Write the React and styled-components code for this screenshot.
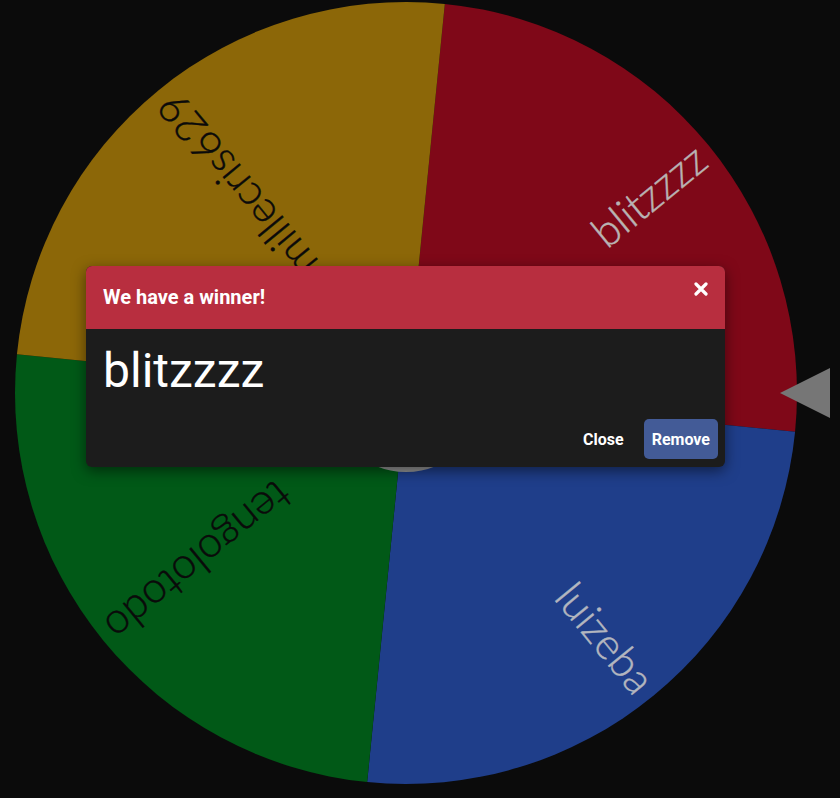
import React from "react";
import styled, { createGlobalStyle } from "styled-components";

const Global = createGlobalStyle`
  html, body { margin: 0; padding: 0; background: #0b0b0b; }
  body { font-family: Roboto, "Liberation Sans", sans-serif; overflow: hidden; }
`;

const Page = styled.div`
  position: relative;
  width: 840px;
  height: 798px;
  box-sizing: border-box;
  padding: 1px 0 0 14px;
  display: flex;
  align-items: flex-start;
`;

const WheelSvg = styled.svg`
  display: block;
  flex: none;
  width: 784px;
  height: 784px;
`;

const Label = styled.text`
  font-family: Lato, "Open Sans", sans-serif;
  font-weight: 300;
  font-size: 43px;
  stroke: ${(p) => p.fill};
  stroke-width: 0.4px;
`;

const Pointer = styled.svg`
  position: absolute;
  left: 780px;
  top: 368px;
  width: 50px;
  height: 50px;
`;

const Modal = styled.div`
  position: absolute;
  left: 86px;
  top: 266px;
  width: 639px;
  background: #1c1c1c;
  border-radius: 6px;
  overflow: hidden;
  box-shadow: 0 4px 14px rgba(0, 0, 0, 0.5);
  display: flex;
  flex-direction: column;
`;

const Header = styled.div`
  background: #b82e3f;
  padding: 16px 17px;
  border-bottom: 1px solid #b82e3f;
  display: flex;
  align-items: flex-start;
  justify-content: space-between;
`;

const Title = styled.h5`
  margin: 0;
  color: #fff;
  font-size: 20px;
  font-weight: 700;
  line-height: 30px;
`;

const CloseX = styled.button`
  background: none;
  border: 0;
  padding: 0;
  margin: 0;
  width: 14px;
  height: 14px;
  display: flex;
  cursor: pointer;
`;

const Body = styled.div`
  padding: 14px 17px 0;
`;

const Winner = styled.div`
  color: #fff;
  font-size: 48px;
  font-weight: 400;
  line-height: 56px;
`;

const Footer = styled.div`
  display: flex;
  justify-content: flex-end;
  align-items: center;
  gap: 12px;
  padding: 20px 7px 8px;
`;

const Btn = styled.button`
  height: 40px;
  padding: 0 8px;
  border: 0;
  border-radius: 5px;
  font-family: Roboto, "Liberation Sans", sans-serif;
  font-size: 16px;
  font-weight: 700;
  color: #fff;
  background: ${(p) => (p.$primary ? "#435b97" : "transparent")};
  cursor: pointer;
`;

const CX = 392;
const CY = 392;
const R = 391;

const segments = [
  { name: "blitzzzz", color: "#7f0818", text: "#b9b3b3" },
  { name: "luizeba", color: "#1f3e8a", text: "#b3b6bf" },
  { name: "tengolotodo", color: "#015917", text: "#0a0a0a" },
  { name: "millecris629", color: "#8c6708", text: "#0a0a0a" },
];

const pt = (deg, r) => {
  const a = (deg * Math.PI) / 180;
  return [CX + r * Math.cos(a), CY + r * Math.sin(a)];
};

function Wheel() {
  const start = -84.3;
  return (
    <WheelSvg viewBox="0 0 784 784">
      {segments.map((s, i) => {
        const a0 = start + 90 * i;
        const a1 = a0 + 90;
        const [x0, y0] = pt(a0, R);
        const [x1, y1] = pt(a1, R);
        return (
          <path
            key={s.name}
            d={`M${CX} ${CY} L${x0} ${y0} A${R} ${R} 0 0 1 ${x1} ${y1} Z`}
            fill={s.color}
          />
        );
      })}
      {segments.map((s, i) => {
        const mid = start + 90 * i + 45;
        return (
          <g key={s.name + "t"} transform={`rotate(${mid} ${CX} ${CY})`}>
            <Label
              x={CX + 380}
              y={CY}
              fill={s.text}
              textAnchor="end"
              dominantBaseline="central"
            >
              {s.name}
            </Label>
          </g>
        );
      })}
      <circle cx={CX} cy={CY} r={79} fill="#979797" />
    </WheelSvg>
  );
}

export default function App() {
  return (
    <>
      <Global />
      <Page>
        <Wheel />
        <Pointer viewBox="0 0 50 50">
          <polygon points="0,25 50,0 50,50" fill="#767676" />
        </Pointer>
        <Modal>
          <Header>
            <Title>We have a winner!</Title>
            <CloseX aria-label="close">
              <svg width="14" height="14" viewBox="0 0 14 14">
                <path d="M2 2 L12 12 M12 2 L2 12" stroke="#fff" strokeWidth="3.2" strokeLinecap="round" />
              </svg>
            </CloseX>
          </Header>
          <Body>
            <Winner>blitzzzz</Winner>
          </Body>
          <Footer>
            <Btn>Close</Btn>
            <Btn $primary>Remove</Btn>
          </Footer>
        </Modal>
      </Page>
    </>
  );
}
